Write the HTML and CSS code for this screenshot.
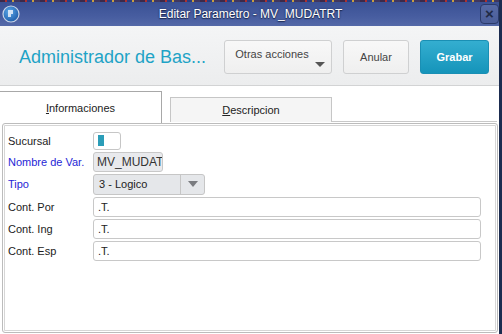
FILE: index.html
```html
<!DOCTYPE html>
<html lang="es">
<head>
<meta charset="UTF-8" />
<title>Editar Parametro</title>
<link rel="stylesheet" href="styles.css">
</head>
<body>
<div class="window">
  <div class="strip"></div>
  <div class="titlebar">
    <svg class="app-icon" width="18" height="18" viewBox="0 0 18 18">
      <defs>
        <radialGradient id="ig" cx="40%" cy="35%" r="70%">
          <stop offset="0" stop-color="#5aa8e8" />
          <stop offset="1" stop-color="#1c5aa8" />
        </radialGradient>
      </defs>
      <circle cx="9" cy="9" r="8" fill="url(#ig)" stroke="#c9d4e6" stroke-width="1.2" />
      <path d="M6 5h5v4h-2v3H6z" fill="#e8f0fa" opacity="0.85" />
    </svg>
    <span class="title">Editar Parametro - MV_MUDATRT</span>
    <span class="close">&#215;</span>
  </div>

  <div class="header">
    <h1>Administrador de Bas...</h1>
    <div class="actions">
      <button class="btn btn-menu">Otras acciones<span class="caret"></span></button>
      <button class="btn">Anular</button>
      <button class="btn btn-primary">Grabar</button>
    </div>
  </div>

  <div class="tabs">
    <div class="tab active"><u>I</u>nformaciones</div>
    <div class="tab"><u>D</u>escripcion</div>
    <div class="tab-fill"></div>
  </div>

  <div class="panel">
    <div class="form">
      <div class="row row-first">
        <label>Sucursal</label>
        <div class="check"><span class="check-bar"></span></div>
      </div>
      <div class="row">
        <label class="req">Nombre de Var.</label>
        <div class="field field-short disabled">MV_MUDATRT</div>
      </div>
      <div class="row">
        <label class="req">Tipo</label>
        <div class="select">
          <span class="select-text">3 - Logico</span>
          <span class="select-btn"><span class="arrow"></span></span>
        </div>
      </div>
      <div class="row">
        <label>Cont. Por</label>
        <div class="field">.T.</div>
      </div>
      <div class="row">
        <label>Cont. Ing</label>
        <div class="field">.T.</div>
      </div>
      <div class="row">
        <label>Cont. Esp</label>
        <div class="field">.T.</div>
      </div>
    </div>
  </div>
</div>
</body>
</html>
```

FILE: styles.css
```css
* {
  margin: 0;
  padding: 0;
  box-sizing: border-box;
}
body {
  font-family: 'Liberation Sans', Arial, sans-serif;
  font-size: 11px;
  color: #222;
  background: #fff;
  width: 502px;
  height: 334px;
  overflow: hidden;
}
.window {
  width: 502px;
  height: 334px;
  display: flex;
  flex-direction: column;
  border-right: 3px solid #1b2c50;
  background: #fff;
}
.strip {
  height: 2px;
  background: repeating-linear-gradient(90deg, #3a2a4a 0 5px, #b03030 5px 7px, #2a3c80 7px 12px, #c8a040 12px 14px, #403860 14px 20px);
}
.titlebar {
  height: 24px;
  display: grid;
  grid-template-columns: 40px 1fr 40px;
  align-items: center;
  background: linear-gradient(#3a5194, #475da0 60%, #5469a8);
  color: #fff;
}
.app-icon {
  margin-left: 2px;
}
.title {
  text-align: center;
  font-size: 12px;
  text-shadow: 0 0 2px #1c2850, 0 1px 1px #1c2850;
  padding-left: 2px;
}
.close {
  justify-self: end;
  width: 19px;
  height: 20px;
  border: 1px solid #2a3a6a;
  border-radius: 4px;
  background: linear-gradient(#5669a4, #4b5e99);
  color: #1f2a45;
  font-size: 15px;
  font-weight: bold;
  line-height: 17px;
  text-align: center;
}

.header {
  height: 60px;
  display: flex;
  align-items: center;
  justify-content: space-between;
  padding: 2px 10px 0 19px;
  background: linear-gradient(#f4f5f6, #ecedee);
  border-bottom: 1px solid #d2d3d4;
}
.header h1 {
  font-size: 18px;
  font-weight: normal;
  color: #1ea3c6;
  margin-top: 1px;
}
.actions {
  display: flex;
  gap: 11px;
}
.btn {
  position: relative;
  height: 34px;
  padding: 0 8px;
  font-family: inherit;
  font-size: 11px;
  color: #444;
  white-space: nowrap;
  border: 1px solid #cfd0d1;
  border-radius: 3px;
  background: linear-gradient(#f8f8f8, #efefef);
}
.btn-menu {
  width: 108px;
  padding: 0 12px 5px 0;
}
.caret {
  position: absolute;
  right: 6px;
  bottom: 6px;
  border-left: 5px solid transparent;
  border-right: 5px solid transparent;
  border-top: 5px solid #555;
}
.btn-primary {
  width: 69px;
  color: #fff;
  font-weight: bold;
  border-color: #1a8fb4;
  background: linear-gradient(#34aed0, #1594ba);
}
.actions .btn:nth-child(2) {
  width: 66px;
}

.tabs {
  height: 37px;
  display: flex;
  align-items: flex-end;
}
.tab {
  width: 162px;
  height: 25px;
  margin-left: 8px;
  display: flex;
  align-items: center;
  justify-content: center;
  background: #f5f5f5;
  border: 1px solid #c6c6c6;
  border-bottom: none;
  color: #222;
  margin-bottom: 1px;
}
.tab.active {
  margin-left: 0;
  height: 32px;
  margin-bottom: 0;
  background: #fff;
  border: none;
  border-top: 1px solid #a8a8a8;
  border-right: 1px solid #a8a8a8;
  padding-top: 1px;
}
.tab-fill {
  flex: 1;
  border-bottom: 1px solid #c8c8c8;
  margin-bottom: 1px;
  margin-right: 2px;
}

.panel {
  flex: 1;
  margin: 0 1px 1px 2px;
  border: 1px solid #bcbcbc;
  border-radius: 3px;
  box-shadow: inset 0 0 0 1px #fff, inset 0 0 0 2px #d6d6d6;
}
.form {
  padding: 6px 16px 0 5px;
  display: flex;
  flex-direction: column;
}
.row {
  height: 22.25px;
  display: grid;
  grid-template-columns: 85px 1fr;
  align-items: center;
}
.row-first {
  height: 21px;
}
.row label {
  color: #222;
}
.row label.req {
  color: #2626d6;
}
.check {
  width: 28px;
  height: 18px;
  border: 1px solid #c6c6c6;
  border-radius: 3px;
  background: #fff;
  padding: 2px 0 0 4px;
}
.check-bar {
  display: block;
  width: 6px;
  height: 11px;
  background: #2b9db8;
}
.field {
  height: 20px;
  border: 1px solid #c8c8c8;
  border-radius: 3px;
  background: #fff;
  padding: 0 4px;
  line-height: 18px;
  font-size: 11px;
  overflow: hidden;
  white-space: nowrap;
}
.field-short {
  width: 70px;
  font-size: 12px;
  padding: 0 3px;
}
.field.disabled {
  background: #e9eaed;
  color: #333;
}
.select {
  width: 112px;
  height: 21px;
  display: flex;
  border: 1px solid #c6c6c6;
  border-radius: 3px;
  background: #e5e7ea;
}
.select-text {
  flex: 1;
  padding-left: 5px;
  line-height: 19px;
  font-size: 11px;
  color: #222;
}
.select-btn {
  width: 24px;
  border-left: 1px solid #c6c6c6;
  display: flex;
  align-items: center;
  justify-content: center;
}
.arrow {
  border-left: 5px solid transparent;
  border-right: 5px solid transparent;
  border-top: 6px solid #7a7c80;
}
```
